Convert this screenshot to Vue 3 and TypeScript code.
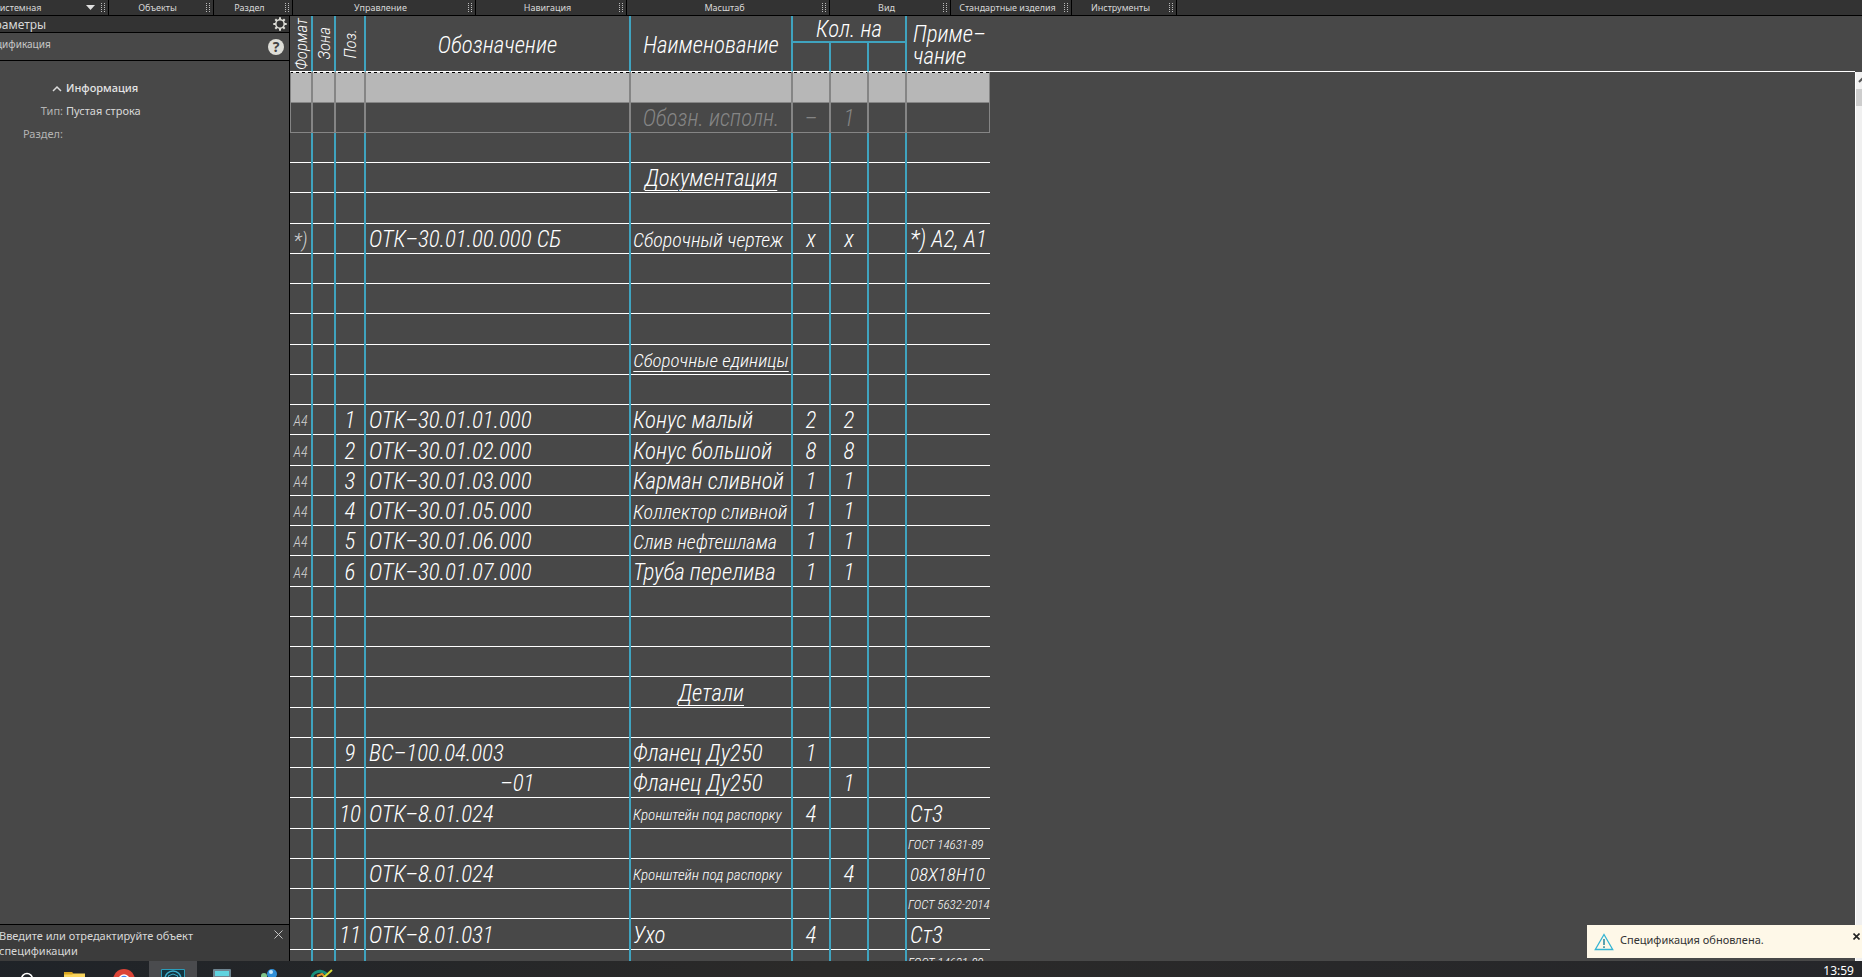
<script setup lang="ts">
interface ToolGroup { label: string; width: number; menu?: boolean }
interface Row {
  format?: string
  pos?: string
  code?: string
  variant?: boolean
  name?: string
  nameFit?: 'tight' | 'narrow'
  section?: boolean
  q1?: string
  q2?: string
  note?: string
  noteFit?: 'tight' | 'small'
  kind?: 'selected' | 'ghost'
}

const groups: ToolGroup[] = [
  { label: 'Системная', width: 133, menu: true },
  { label: 'Объекты', width: 105 },
  { label: 'Раздел', width: 79 },
  { label: 'Управление', width: 183 },
  { label: 'Навигация', width: 151 },
  { label: 'Масштаб', width: 203 },
  { label: 'Вид', width: 121 },
  { label: 'Стандартные изделия', width: 121 },
  { label: 'Инструменты', width: 105 },
]

const rows: Row[] = [
  { kind: 'selected' },
  { kind: 'ghost', name: 'Обозн. исполн.', q1: '–', q2: '1' },
  {},
  { section: true, name: 'Документация' },
  {},
  { format: '*)', code: 'ОТК–30.01.00.000 СБ', name: 'Сборочный чертеж', nameFit: 'tight', q1: 'х', q2: 'х', note: '*) А2, А1' },
  {},
  {},
  {},
  { section: true, name: 'Сборочные единицы', nameFit: 'tight' },
  {},
  { format: 'А4', pos: '1', code: 'ОТК–30.01.01.000', name: 'Конус малый', q1: '2', q2: '2' },
  { format: 'А4', pos: '2', code: 'ОТК–30.01.02.000', name: 'Конус большой', q1: '8', q2: '8' },
  { format: 'А4', pos: '3', code: 'ОТК–30.01.03.000', name: 'Карман сливной', q1: '1', q2: '1' },
  { format: 'А4', pos: '4', code: 'ОТК–30.01.05.000', name: 'Коллектор сливной', nameFit: 'tight', q1: '1', q2: '1' },
  { format: 'А4', pos: '5', code: 'ОТК–30.01.06.000', name: 'Слив нефтешлама', nameFit: 'tight', q1: '1', q2: '1' },
  { format: 'А4', pos: '6', code: 'ОТК–30.01.07.000', name: 'Труба перелива', q1: '1', q2: '1' },
  {},
  {},
  {},
  { section: true, name: 'Детали' },
  {},
  { pos: '9', code: 'ВС–100.04.003', name: 'Фланец Ду250', q1: '1' },
  { code: '–01', variant: true, name: 'Фланец Ду250', q2: '1' },
  { pos: '10', code: 'ОТК–8.01.024', name: 'Кронштейн под распорку', nameFit: 'narrow', q1: '4', note: 'Ст3' },
  { note: 'ГОСТ 14631-89', noteFit: 'small' },
  { code: 'ОТК–8.01.024', name: 'Кронштейн под распорку', nameFit: 'narrow', q2: '4', note: '08Х18Н10', noteFit: 'tight' },
  { note: 'ГОСТ 5632-2014', noteFit: 'small' },
  { pos: '11', code: 'ОТК–8.01.031', name: 'Ухо', q1: '4', note: 'Ст3' },
  { note: 'ГОСТ 14631-89', noteFit: 'small' },
]
</script>

<template>
  <div class="app">
    <nav class="toolbar">
      <div v-for="g in groups" :key="g.label" class="group" :style="{ width: g.width + 'px' }">
        <button type="button" class="group-label">{{ g.label }}</button>
        <svg v-if="g.menu" class="caret" viewBox="0 0 9 6"><path d="M0 0h9L4.500 5z" /></svg>
        <i class="grip"></i>
      </div>
    </nav>

    <div class="workspace">
      <aside class="sidebar">
        <header class="panel-title">
          <h1>Параметры</h1>
          <button type="button" class="icon-button" aria-label="Настройки">
            <svg width="14" height="14" viewBox="0 0 14 14" fill="none" stroke="#deded8">
              <circle cx="7" cy="7" r="4.200" stroke-width="1.500" />
              <path d="M7 .3v2.500M7 11.200v2.500M.3 7h2.500M11.200 7h2.500M2.300 2.300l1.700 1.700M10 10l1.700 1.700M2.300 11.700L4 10M10 4l1.700-1.700" stroke-width="2" />
            </svg>
          </button>
        </header>
        <header class="panel-sub">
          <h2>Спецификация</h2>
          <button type="button" class="help" aria-label="Справка">?</button>
        </header>
        <section class="info">
          <button type="button" class="info-toggle">
            <svg width="10" height="7" viewBox="0 0 10 7"><path d="M1 6l4-4 4 4" fill="none" stroke="#dcdcdc" stroke-width="1.500" /></svg>
            Информация
          </button>
          <dl>
            <dt>Тип:</dt><dd>Пустая строка</dd>
            <dt>Раздел:</dt><dd></dd>
          </dl>
        </section>
        <footer class="hint">
          <p>Введите или отредактируйте объект спецификации</p>
          <button type="button" class="hint-close" aria-label="Закрыть">
            <svg width="9" height="9" viewBox="0 0 9 9"><path d="M.5.5l8 8M8.500.5l-8 8" stroke="#c4c4c4" /></svg>
          </button>
        </footer>
      </aside>

      <main class="sheet">
        <table>
          <colgroup>
            <col class="c-format"><col class="c-zone"><col class="c-pos"><col class="c-code"><col class="c-name">
            <col class="c-qty"><col class="c-qty"><col class="c-qty"><col class="c-note">
          </colgroup>
          <thead>
            <tr class="head-top">
              <th rowspan="2"><span class="upright">Формат</span></th>
              <th rowspan="2"><span class="upright">Зона</span></th>
              <th rowspan="2"><span class="upright">Поз.</span></th>
              <th rowspan="2" class="head-text">Обозначение</th>
              <th rowspan="2" class="head-text">Наименование</th>
              <th colspan="3" class="qty-head">Кол. на</th>
              <th rowspan="2" class="head-text note-head">Приме–<br>чание</th>
            </tr>
            <tr class="head-sub"><th></th><th></th><th></th></tr>
          </thead>
          <tbody>
            <tr v-for="(r, i) in rows" :key="i" :class="r.kind">
              <td class="format" :class="{ mark: r.format === '*)' }">{{ r.format }}</td>
              <td></td>
              <td class="center">{{ r.pos }}</td>
              <td class="code" :class="{ variant: r.variant }">{{ r.code }}</td>
              <td class="name" :class="[r.nameFit, { section: r.section }]"><span>{{ r.name }}</span></td>
              <td class="center">{{ r.q1 }}</td>
              <td class="center">{{ r.q2 }}</td>
              <td></td>
              <td class="note" :class="r.noteFit">{{ r.note }}</td>
            </tr>
          </tbody>
        </table>
      </main>

      <div class="scrollbar">
        <svg class="scroll-up" width="6" height="17" viewBox="0 0 6 17"><path d="M3 10l4-4" stroke="#555" stroke-width="2" /></svg>
        <div class="thumb"></div>
      </div>

      <div class="toast" role="status">
        <svg width="20" height="18" viewBox="0 0 20 18" fill="none" stroke="#35b4d3">
          <path d="M10 1.500L18.700 16.500H1.300z" stroke-width="1.300" />
          <path d="M10 6v6M10 13.300v1.700" stroke="#4a97a8" stroke-width="1.800" />
        </svg>
        <p>Спецификация обновлена.</p>
        <button type="button" class="toast-close" aria-label="Закрыть">
          <svg width="7" height="7" viewBox="0 0 7 7"><path d="M.5.5l6 6M6.500.5l-6 6" stroke="#222" stroke-width="1.600" /></svg>
        </button>
      </div>
    </div>

    <footer class="taskbar">
      <div class="tasks">
        <button type="button" class="task" aria-label="Поиск">
          <svg viewBox="0 0 48 16"><circle cx="22" cy="18" r="5.500" fill="none" stroke="#fff" stroke-width="1.500" /></svg>
        </button>
        <button type="button" class="task" aria-label="Проводник">
          <svg viewBox="0 0 48 16"><path d="M11 11h8l2 2h11v4H11z" fill="#d9a520" /><path d="M11 13.500h8l2-1h11V17H11z" fill="#f8d45c" /></svg>
        </button>
        <button type="button" class="task" aria-label="Браузер">
          <svg viewBox="0 0 48 16"><circle cx="23" cy="19" r="11" fill="#dc4437" /><circle cx="23" cy="19" r="5" fill="#4285f4" stroke="#fff" stroke-width="1.500" /></svg>
        </button>
        <button type="button" class="task active" aria-label="Система проектирования">
          <svg viewBox="0 0 48 16"><path d="M12.500 20V8.500h23V20" fill="#12343f" stroke="#2a9dbb" /><circle cx="24" cy="18" r="8" fill="none" stroke="#3aaccb" stroke-width="1.500" /><path d="M19 15l5-2 5 2-2 3h-6z" fill="none" stroke="#3aaccb" /></svg>
        </button>
        <button type="button" class="task" aria-label="Калькулятор">
          <svg viewBox="0 0 48 16"><rect x="16" y="8" width="18" height="14" rx="1" fill="#6d8490" /><rect x="18" y="10" width="14" height="5" fill="#5fd3df" /></svg>
        </button>
        <button type="button" class="task" aria-label="Сеть">
          <svg viewBox="0 0 48 16"><circle cx="19" cy="15" r="3" fill="#7fc48a" /><circle cx="27" cy="13" r="5" fill="#2f8fd8" /><circle cx="26" cy="11" r="2" fill="#c4e6fa" /></svg>
        </button>
        <button type="button" class="task" aria-label="Редактор">
          <svg viewBox="0 0 48 16"><path d="M19 18a8 7 0 0 1 15-4" fill="none" stroke="#17907c" stroke-width="3" /><path d="M24 15l5-2 3 3" fill="none" stroke="#e0902c" stroke-width="2" /><path d="M29 18l10-9" stroke="#d7dc35" stroke-width="2" /></svg>
        </button>
      </div>
      <time>13:59</time>
    </footer>
  </div>
</template>

<style>
body { margin: 0; overflow: hidden; background: #484848; }
</style>

<style scoped>
.app {
  display: flex;
  flex-direction: column;
  height: 100vh;
  margin-left: -24px;
  overflow: hidden;
  background: #484848;
  color: #d8d8d8;
  font-family: "Noto Sans", "Open Sans", sans-serif;
  font-size: 11px;
}
button {
  padding: 0;
  border: 0;
  background: none;
  color: inherit;
  font: inherit;
}
svg { display: block; }
h1, h2, p, dl, dd { margin: 0; font-weight: 400; }

.toolbar {
  display: flex;
  flex: none;
  height: 15px;
  border-bottom: 1px solid #000;
  background: #333;
  font-size: 9px;
  line-height: 14px;
}
.group {
  display: flex;
  align-items: center;
  box-sizing: border-box;
  border-right: 1px solid #000;
}
.group-label { flex: 1; white-space: nowrap; text-align: center; }
.group:first-child .group-label { padding-left: 18px; text-align: left; }
.caret { width: 9px; height: 6px; margin-right: 6px; fill: #e0e0e0; }
.grip {
  flex: none;
  width: 4px;
  height: 9px;
  margin-right: 3px;
  background: repeating-linear-gradient(to right, transparent 0 1px, #333 1px 3px), repeating-linear-gradient(#bbb 0 1px, #333 1px 2px);
}

.workspace { position: relative; display: flex; flex: 1; min-height: 0; overflow: hidden; }
.sidebar {
  display: flex;
  flex: none;
  flex-direction: column;
  box-sizing: border-box;
  width: 314px;
  border-right: 1px solid #000;
}
.panel-title, .panel-sub {
  display: flex;
  align-items: center;
  justify-content: space-between;
  border-bottom: 1px solid #000;
}
.panel-title { height: 16px; padding: 0 2px 0 3px; background: #333; }
.panel-title h1 { font-size: 12px; }
.panel-sub { height: 27px; padding: 0 5px 0 2px; }
.panel-sub h2 { align-self: flex-start; padding-top: 4px; font-size: 10px; line-height: 14px; color: #c8c8c8; }
.help {
  width: 16px;
  height: 16px;
  border-radius: 8px;
  background: #deded8;
  color: #444;
  font-size: 14px;
  font-weight: 700;
  line-height: 16px;
}
.info { flex: 1; padding: 18px 0 0 24px; }
.info-toggle { display: flex; align-items: center; gap: 4px; margin-left: 52px; line-height: 18px; color: #e4e4e4; font-weight: 500; }
dl { display: grid; grid-template-columns: 63px 1fr; gap: 5px 3px; margin-top: 5px; line-height: 18px; }
dt { text-align: right; color: #b4b4b4; }
.hint {
  display: flex;
  align-items: flex-start;
  justify-content: space-between;
  height: 36px;
  padding-left: 23px;
  padding-right: 6px;
  border-top: 1px solid #000;
  background: #3c3c3c;
}
.hint p { width: 220px; padding-top: 3px; line-height: 15px; }
.hint-close { margin-top: 5px; }

.sheet {
  flex: 1;
  overflow: hidden;
  background: linear-gradient(#fff, #fff) 0 55px / 100% 1px no-repeat;
  color: #fff;
  font-family: "Roboto Condensed", Roboto, sans-serif;
  font-size: 23px;
  font-style: italic;
  font-weight: 300;
}
table { width: 700px; table-layout: fixed; border-spacing: 0; }
.c-format, .c-zone { width: 23px; }
.c-pos { width: 30px; }
.c-code { width: 265px; }
.c-name { width: 162px; }
.c-qty { width: 38px; }
.c-note { width: 83px; }
th, td {
  box-sizing: border-box;
  padding: 0;
  overflow: hidden;
  border-right: 2px solid #3fa3bf;
  white-space: nowrap;
  line-height: 22px;
}
th { border-bottom: 1px solid #fff; font-weight: 300; }
.head-top { height: 27px; }
.head-sub { height: 29px; }
.head-text { padding-top: 4px; }
.qty-head { padding-top: 3px; border-bottom: 2px solid #3fa3bf; }
.note-head, td:last-child { border-right: 0; }
.note-head { padding-left: 6px; text-align: left; }
.upright { display: block; width: 20px; max-height: 54px; margin: auto; writing-mode: vertical-rl; transform: rotate(180deg); font-size: 17px; line-height: 20px; }

td { height: 30px; padding-top: 2px; box-shadow: inset 0 -1px #fff; }
tr:nth-child(4n + 1) td { height: 31px; }
tr:last-child td { vertical-align: top; }
.center { text-align: center; }
.code { padding-left: 3px; }
.variant { padding-left: 134px; }
.name { padding-left: 2px; }
.note { padding-left: 3px; }
.tight { font-size: 20px; }
.note.tight { font-size: 19px; }
.narrow { font-size: 15px; }
.small { padding-left: 1px; font-size: 13px; }
.format { text-align: center; font-size: 14px; color: #d0d0d0; }
.mark { font-size: 20px; }
.section { padding-left: 0; text-align: center; text-decoration: underline; text-decoration-thickness: 1px; text-underline-offset: 4px; }
.section.tight { font-size: 19px; }
.selected {
  background: repeating-linear-gradient(to right, #000 0 3px, #ddd 3px 6px) 0 0 / 100% 1px no-repeat, #b7b7b7;
}
.selected td, .ghost td { border-color: #858585; color: #858585; box-shadow: inset 0 -1px #858585; }
.selected td:first-child, .ghost td:first-child { border-left: 1px solid #858585; }
.selected td:last-child, .ghost td:last-child { border-right: 1px solid #858585; }
.ghost .name { padding-left: 0; text-align: center; }

.scrollbar { flex: none; width: 6px; margin-top: 56px; border-left: 1px solid #fff; background: #f0f0f0; }
.thumb { height: 17px; background: #cdcdcd; }
.toast {
  position: absolute;
  right: 0;
  bottom: 3px;
  display: flex;
  box-sizing: border-box;
  width: 275px;
  height: 33px;
  padding: 8px 2px 0 7px;
  background: #fef8e8;
  color: #333;
}
.toast p { flex: 1; padding-left: 6px; line-height: 14px; }
.toast-close { align-self: flex-start; }

.taskbar {
  display: flex;
  flex: none;
  justify-content: space-between;
  height: 16px;
  overflow: hidden;
  background: linear-gradient(to right, #1f2328, #2b2a29 45%, #25262a);
}
.tasks { display: flex; padding-left: 29px; }
.task { width: 48px; height: 16px; overflow: hidden; }
.task svg { width: 48px; height: 16px; }
.active { background: #4a4b4e; }
time { padding-right: 8px; color: #fff; font-size: 12px; line-height: 20px; }
</style>
